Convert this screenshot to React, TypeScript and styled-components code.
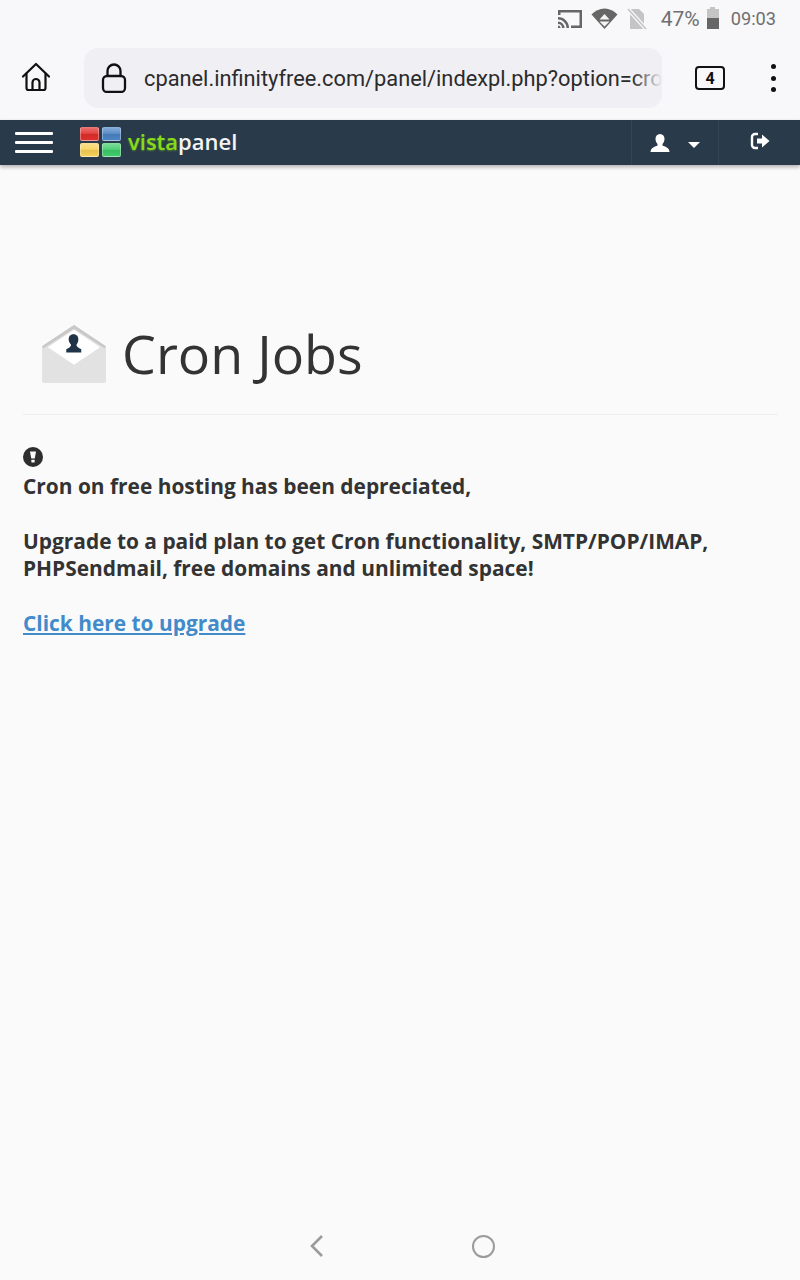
import styled, { createGlobalStyle } from "styled-components";
import React from "react";

const GlobalStyle = createGlobalStyle`
  html, body {
    margin: 0;
    padding: 0;
    background: #fafafa;
  }
  * { box-sizing: border-box; }
`;

const App = () => {
  return (
    <Screen>
      <GlobalStyle />
      <StatusBar>
        <svg width="26" height="20" viewBox="0 0 26 20">
          <path d="M1 1h24v18H14v-2.500h8.500v-13h-19V6H1z" fill="#666" />
          <path d="M1 8a11 11 0 0 1 11 11H9.500A8.500 8.500 0 0 0 1 10.500zM1 12.500A6.500 6.500 0 0 1 7.500 19H5a4 4 0 0 0-4-4zM1 16.500A2.500 2.500 0 0 1 3.500 19H1z" fill="#666" />
        </svg>
        <WifiIcon width="27" height="21" viewBox="0 0 27 21">
          <path d="M13.500 21L0.500 6.500C4 3 8.500 0.500 13.500 0.500s9.500 2.500 13 6z" fill="#666" />
          <path d="M13.500 6l5 5.500h-10z" fill="#f4f4f4" />
          <path d="M8.500 13.500h10l-5 5z" fill="#f4f4f4" />
        </WifiIcon>
        <SimIcon width="20" height="22" viewBox="0 0 20 22">
          <path d="M3 1h9l5 5v15H3z" fill="#c4c4c4" />
          <path d="M1 1l18 20" stroke="#f8f8fa" strokeWidth="4" />
          <path d="M1 1l18 20" stroke="#c4c4c4" strokeWidth="1.600" />
        </SimIcon>
        <Percent>47%</Percent>
        <Battery>
          <BatteryCap />
          <BatteryBody />
        </Battery>
        <Clock>09:03</Clock>
      </StatusBar>

      <BrowserBar>
        <HomeButton>
          <svg width="30" height="30" viewBox="0 0 30 30" fill="none" stroke="#111" strokeWidth="2.200" strokeLinejoin="round" strokeLinecap="round">
            <path d="M2 14.500L15 2l13 12.500" />
            <path d="M5.500 11.500V26a2 2 0 0 0 2 2h15a2 2 0 0 0 2-2V11.500" />
            <path d="M11.500 28v-7.500a3.500 3.500 0 0 1 7 0V28" />
          </svg>
        </HomeButton>
        <UrlBox>
          <LockIcon width="26" height="30" viewBox="0 0 26 30" fill="none" stroke="#111" strokeWidth="2.300">
            <rect x="2" y="13" width="22" height="16" rx="4" />
            <path d="M6.500 13V8a6.500 6.500 0 0 1 13 0v5" />
          </LockIcon>
          <UrlText>cpanel.infinityfree.com/panel/indexpl.php?option=cro</UrlText>
          <UrlFade />
        </UrlBox>
        <TabCount>4</TabCount>
        <MenuDots>
          <i />
          <i />
          <i />
        </MenuDots>
      </BrowserBar>

      <NavBar>
        <Burger>
          <i />
          <i />
          <i />
        </Burger>
        <LogoGrid>
          <LogoCell $color="#e0302c" />
          <LogoCell $color="#4b84c4" />
          <LogoCell $color="#f6d158" />
          <LogoCell $color="#3fcb6a" />
        </LogoGrid>
        <Brand>
          <BrandGreen>vista</BrandGreen>panel
        </Brand>
        <NavSection $width={87}>
          <svg width="20" height="18" viewBox="0 0 20 18" fill="#fff">
            <path d="M10 0c3 0 4.500 2.200 4.500 5 0 2.300-1 4-2 5v1.500c2 1 7 2 7 6.500H.5c0-4.500 5-5.500 7-6.500V10c-1-1-2-2.700-2-5 0-2.800 1.500-5 4.500-5z" />
          </svg>
          <Caret />
        </NavSection>
        <NavSection $width={82}>
          <ExitIcon width="20" height="18" viewBox="0 0 20 18">
            <path d="M8 2H5a3 3 0 0 0-3 3v8a3 3 0 0 0 3 3h3" fill="none" stroke="#fff" strokeWidth="2.400" />
            <path d="M7 6.500h5V2.500L19.500 9 12 15.500v-4H7z" fill="#fff" />
          </ExitIcon>
        </NavSection>
      </NavBar>

      <Main>
        <PageHeader>
          <EnvelopeIcon width="66" height="60" viewBox="0 0 68 62">
            <path d="M1 23L34 1l33 22v36a2 2 0 0 1-2 2H3a2 2 0 0 1-2-2z" fill="#e2e2e2" />
            <path d="M1 23L34 1l33 22-1.500 2L34 5 2.500 25z" fill="#c8c8c8" />
            <path d="M7 24L34 6l27 18-27 18z" fill="#fff" />
            <path d="M33.500 10.500c3.500 0 5 2.500 5 5.500 0 2.500-1 4-2 5.500.3 2.500 2 3 5 4.500v3.500H26V26c3-1.500 4.700-2 5-4.500-1-1.500-2.500-3-2.500-5.500 0-3 1.500-5.500 5-5.500z" fill="#1f3446" />
          </EnvelopeIcon>
          <Title>Cron Jobs</Title>
        </PageHeader>
        <Notice>
          <NoticeIcon width="20" height="20" viewBox="0 0 20 20">
            <circle cx="10" cy="10" r="10" fill="#2e2e2e" />
            <path d="M7 4.500h6L11.700 11.500H8.300z" fill="#fafafa" />
            <rect x="8.400" y="12.800" width="3.200" height="2.800" rx="0.500" fill="#fafafa" />
          </NoticeIcon>
          <div>Cron on free hosting has been depreciated,</div>
          <NoticeBlock>
            Upgrade to a paid plan to get Cron functionality, SMTP/POP/IMAP,
            <br />
            PHPSendmail, free domains and unlimited space!
          </NoticeBlock>
          <UpgradeLink href="#">Click here to upgrade</UpgradeLink>
        </Notice>
      </Main>

      <SystemNav>
        <svg width="16" height="24" viewBox="0 0 16 24" fill="none" stroke="#9b9b9d" strokeWidth="2.600">
          <path d="M13 2L3 12l10 10" />
        </svg>
        <HomeCircle />
      </SystemNav>
    </Screen>
  );
};

const Screen = styled.div`
  width: 800px;
  height: 1280px;
  display: flex;
  flex-direction: column;
  overflow: hidden;
  background: #fafafa;
`;

const StatusBar = styled.div`
  height: 40px;
  display: flex;
  align-items: center;
  justify-content: flex-end;
  padding: 0 24px 3px 0;
  background: #f8f8fa;
  font-family: Roboto, sans-serif;
  color: #6f6f6f;
`;

const WifiIcon = styled.svg`
  margin-left: 8px;
`;

const SimIcon = styled.svg`
  margin-left: 9px;
`;

const Percent = styled.span`
  margin-left: 14px;
  font-size: 21px;
`;

const Battery = styled.div`
  width: 12px;
  height: 22px;
  margin-left: 7px;
  margin-bottom: 2px;
  display: flex;
  flex-direction: column;
  align-items: center;
`;

const BatteryCap = styled.div`
  width: 5px;
  height: 2px;
  background: #c4c4c4;
`;

const BatteryBody = styled.div`
  width: 12px;
  flex: 1;
  background: linear-gradient(#c4c4c4 47%, #666 47%);
`;

const Clock = styled.span`
  margin-left: 12px;
  font-size: 18.200px;
`;

const BrowserBar = styled.div`
  height: 80px;
  display: flex;
  align-items: flex-start;
  padding-top: 8px;
  background: #f8f8fa;
`;

const HomeButton = styled.div`
  width: 84px;
  height: 60px;
  padding: 14px 0 0 21px;
`;

const UrlBox = styled.div`
  position: relative;
  width: 578px;
  height: 60px;
  display: flex;
  align-items: center;
  gap: 17px;
  padding-left: 17px;
  border-radius: 14px;
  background: #f0eff4;
  overflow: hidden;
`;

const LockIcon = styled.svg`
  flex-shrink: 0;
`;

const UrlText = styled.span`
  font-family: Roboto, sans-serif;
  font-size: 21.800px;
  color: #2b2b2b;
  white-space: nowrap;
`;

const UrlFade = styled.div`
  position: absolute;
  top: 0;
  right: 0;
  width: 30px;
  height: 60px;
  background: linear-gradient(to right, rgba(240, 239, 244, 0), #f0eff4 100%);
`;

const TabCount = styled.div`
  width: 30px;
  height: 24px;
  margin: 18px 0 0 33px;
  display: flex;
  align-items: center;
  justify-content: center;
  border: 2.500px solid #111;
  border-radius: 4px;
  font-family: Roboto, sans-serif;
  font-size: 16px;
  font-weight: 700;
  color: #111;
`;

const MenuDots = styled.div`
  margin: 16px 0 0 46px;
  height: 28px;
  display: flex;
  flex-direction: column;
  justify-content: space-between;

  i {
    display: block;
    width: 5px;
    height: 5px;
    border-radius: 50%;
    background: #111;
  }
`;

const NavBar = styled.div`
  height: 45px;
  display: flex;
  align-items: center;
  background: #293a4a;
  box-shadow: 0 2px 4px rgba(0, 0, 0, 0.3);
`;

const Burger = styled.div`
  width: 38px;
  height: 21px;
  margin-left: 15px;
  display: flex;
  flex-direction: column;
  justify-content: space-between;

  i {
    display: block;
    height: 3px;
    border-radius: 1px;
    background: #fff;
  }
`;

const LogoGrid = styled.div`
  display: grid;
  grid-template-columns: 19px 19px;
  grid-template-rows: 14px 14px;
  column-gap: 3px;
  row-gap: 2px;
  margin: -1px 0 0 27px;
`;

const LogoCell = styled.div<{ $color: string }>`
  border-radius: 2px;
  border: 1px solid rgba(255, 255, 255, 0.35);
  background: linear-gradient(
    rgba(255, 255, 255, 0.3),
    rgba(255, 255, 255, 0.1) 45%,
    rgba(0, 0, 0, 0.08) 50%,
    rgba(0, 0, 0, 0)
  );
  background-color: ${({ $color }) => $color};
`;

const Brand = styled.div`
  margin: -3px auto 0 7px;
  font-family: "Open Sans", sans-serif;
  font-size: 22px;
  font-weight: 600;
  color: #f4f4f4;
`;

const BrandGreen = styled.span`
  color: #86dc18;
  text-shadow: 0 1px 2px rgba(120, 200, 20, 0.5);
`;

const NavSection = styled.div<{ $width: number }>`
  width: ${({ $width }) => $width}px;
  height: 45px;
  display: flex;
  align-items: center;
  justify-content: center;
  gap: 18px;
  border-left: 1px solid #344656;
`;

const ExitIcon = styled.svg`
  margin: -3px 0 0 1px;
`;

const Caret = styled.div`
  width: 0;
  height: 0;
  margin-top: 4px;
  border-left: 6px solid transparent;
  border-right: 6px solid transparent;
  border-top: 6px solid #fff;
`;

const Main = styled.main`
  flex: 1;
  padding: 0 22px 0 23px;
`;

const PageHeader = styled.div`
  height: 250px;
  padding: 158px 0 0 18px;
  display: flex;
  align-items: flex-start;
  gap: 15px;
  border-bottom: 1px solid #eeeeee;
`;

const EnvelopeIcon = styled.svg`
  flex-shrink: 0;
  margin-top: 1px;
`;

const Title = styled.h1`
  margin: -6px 0 0;
  font-family: "Open Sans", sans-serif;
  font-size: 53.800px;
  font-weight: 400;
  line-height: 72px;
  color: #333333;
`;

const Notice = styled.div`
  padding-top: 32px;
  font-family: "Open Sans", sans-serif;
  font-size: 20.900px;
  font-weight: 700;
  line-height: 27px;
  color: #333333;
`;

const NoticeIcon = styled.svg`
  display: block;
  margin-bottom: 6px;
`;

const NoticeBlock = styled.div`
  margin-top: 28px;
`;

const UpgradeLink = styled.a`
  display: block;
  margin-top: 28px;
  color: #428bca;
  text-decoration: underline;
`;

const SystemNav = styled.div`
  height: 68px;
  display: flex;
  align-items: flex-start;
  justify-content: center;
  padding: 22px 0 0 3px;
  gap: 147px;
`;

const HomeCircle = styled.div`
  width: 23px;
  height: 23px;
  margin-top: 1px;
  border: 2.500px solid #9b9b9d;
  border-radius: 50%;
`;

export default App;
